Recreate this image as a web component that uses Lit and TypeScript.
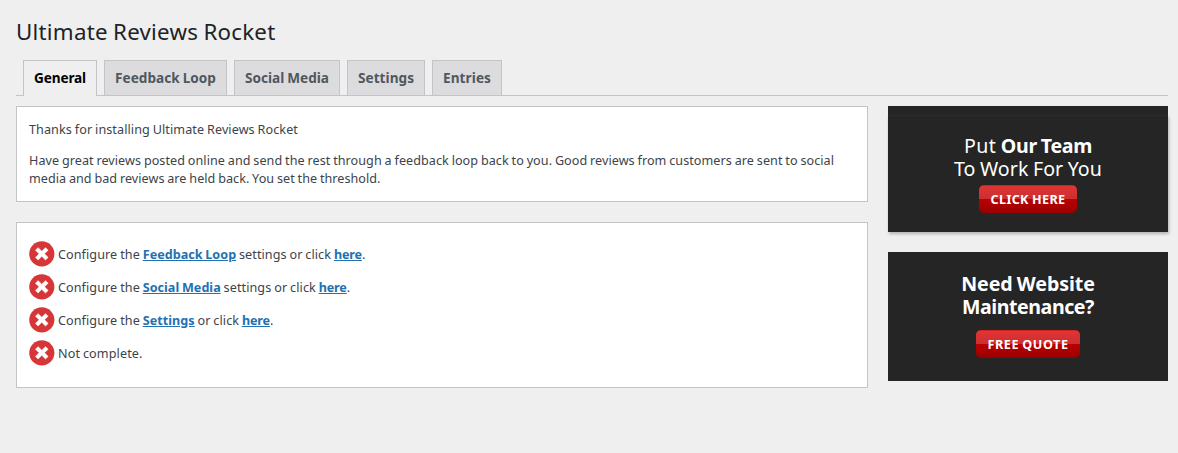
import { LitElement, html, css, svg } from "lit";
import { customElement, property } from "lit/decorators.js";

/** A run of text whose tracking is computed so that it spans a given width. */
@customElement("fit-run")
class FitRun extends LitElement {
  @property({ type: Number }) width = 0;
  @property() text = "";

  static styles = css`
    :host { display: inline; }
    .run { white-space: pre; word-spacing: -0.04em; }
  `;

  render() {
    return html`<span class="run">${this.text}</span>`;
  }

  updated() {
    const run = this.renderRoot.querySelector(".run") as HTMLElement;
    run.style.letterSpacing = "0px";
    const natural = run.getBoundingClientRect().width;
    run.style.letterSpacing = `${(this.width - natural) / this.text.length}px`;
  }
}

const fit = (text: string, width: number) =>
  html`<fit-run .text=${text} .width=${width}></fit-run>`;

const tabs = [
  { label: "General", width: 52, active: true },
  { label: "Feedback Loop", width: 101 },
  { label: "Social Media", width: 84 },
  { label: "Settings", width: 56 },
  { label: "Entries", width: 48 },
];

const steps = [
  { link: "Feedback Loop", linkWidth: 93.4, rest: " settings or click ", restWidth: 97.8 },
  { link: "Social Media", linkWidth: 78, rest: " settings or click ", restWidth: 98 },
  { link: "Settings", linkWidth: 52, rest: " or click ", restWidth: 47.2 },
];

const cross = html`<svg class="cross" viewBox="0 0 26 26">
  ${svg`<circle cx="12.8" cy="12.8" r="12.6" fill="#d63638"></circle>
  <path d="M9.1 6.7 12.8 10.3 16.5 6.7 19.1 9.2 15.5 12.8 19.1 16.4 16.5 18.9 12.8 15.3 9.1 18.9 6.5 16.4 10.1 12.8 6.5 9.2Z"
    fill="#fff" stroke="#fff" stroke-width=".6" stroke-linejoin="round"></path>`}
</svg>`;

@customElement("app-root")
class AppRoot extends LitElement {
  static styles = css`
    :host {
      display: block;
      box-sizing: border-box;
      height: 453px;
      padding: 19px 10px 0 16px;
      background: #efefef;
      color: #3c434a;
      font: 12.6px/18px "Noto Sans", sans-serif;
    }
    h1 {
      margin: 0;
      height: 41px;
      font-size: 22.3px;
      line-height: 25px;
      font-weight: 400;
      color: #1d2327;
    }
    .tabs {
      display: flex;
      gap: 7px;
      height: 35px;
      padding-left: 7px;
      border-bottom: 1px solid #c3c4c7;
    }
    .tab {
      box-sizing: border-box;
      height: 35px;
      padding: 5px 10px;
      border: 1px solid #c3c4c7;
      border-bottom: 0;
      background: #dcdcde;
      color: #50575e;
      font-size: 13.6px;
      line-height: 24px;
      font-weight: 700;
      text-decoration: none;
    }
    .tab.active {
      height: 36px;
      background: #efefef;
      color: #000;
    }
    .columns {
      display: grid;
      grid-template-columns: 852px 280px;
      gap: 20px;
      padding-top: 10px;
      align-items: start;
    }
    .main, .side { display: flex; flex-direction: column; gap: 20px; }
    .card {
      box-sizing: border-box;
      background: #fff;
      border: 1px solid #c3c4c7;
      padding: 14px 12px 12px;
    }
    .intro { height: 96px; }
    .intro p { margin: 0 0 13px; }
    .line { display: block; }
    .steps { height: 166px; padding-top: 14px; }
    .step { display: flex; align-items: center; gap: 3px; height: 33px; white-space: pre; }
    .step .words { padding-top: 2px; }
    .cross { width: 26px; height: 26px; flex: none; }
    .link {
      color: #2271b1;
      font-weight: 700;
      text-decoration: underline;
    }
    .promo {
      box-sizing: border-box;
      background: #252525;
      color: #fff;
      text-align: center;
      font-size: 19.6px;
      line-height: 23px;
    }
    .team { height: 126px; padding-top: 9px; }
    .team .inner {
      box-sizing: border-box;
      height: 117px;
      padding-top: 18px;
      border-top: 1px solid #2a2a2a;
      box-shadow: 1px 2px 3px rgba(0, 0, 0, 0.25);
      clip-path: inset(0 -6px -6px -6px);
    }
    .quote { height: 129px; padding-top: 20px; }
    .bold { font-weight: 700; }
    .button {
      display: block;
      box-sizing: border-box;
      height: 28px;
      margin: 5px auto 0;
      padding-top: 1px;
      border-radius: 5px;
      background: linear-gradient(#c81c1c 0, #e03334 1.5px, #ca3030 50%, #bc0000 50%, #980000);
      color: #fff;
      font-size: 12.6px;
      line-height: 27px;
      font-weight: 700;
      text-decoration: none;
    }
    .click { width: 98px; }
    .free { width: 104px; margin-top: 12px; }
  `;

  render() {
    return html`
      <h1>${fit("Ultimate Reviews Rocket", 259.5)}</h1>
      <nav class="tabs">
        ${tabs.map((t) => html`<a class="tab ${t.active ? "active" : ""}">${fit(t.label, t.width)}</a>`)}
      </nav>
      <div class="columns">
        <div class="main">
          <section class="card intro">
            <p>${fit("Thanks for installing Ultimate Reviews Rocket", 269)}</p>
            <p>
              <span class="line">${fit("Have great reviews posted online and send the rest through a feedback loop back to you. Good reviews from customers are sent to social", 805)}</span>
              <span class="line">${fit("media and bad reviews are held back. You set the threshold.", 351.5)}</span>
            </p>
          </section>
          <section class="card steps">
            ${steps.map((s) => html`<div class="step">${cross}<span class="words">${fit("Configure the ", 84.7)}<a class="link">${fit(s.link, s.linkWidth)}</a>${fit(s.rest, s.restWidth)}<a class="link">${fit("here", 28)}</a>.</span></div>`)}
            <div class="step">${cross}<span class="words">${fit("Not complete.", 84.5)}</span></div>
          </section>
        </div>
        <aside class="side">
          <section class="promo team">
            <div class="inner">
              <span class="line">${fit("Put ", 36.8)}<span class="bold">${fit("Our Team", 91.2)}</span></span>
              <span class="line">${fit("To Work For You", 148)}</span>
              <a class="button click">${fit("CLICK HERE", 75)}</a>
            </div>
          </section>
          <section class="promo quote">
            <span class="line bold">${fit("Need Website", 133.5)}</span>
            <span class="line bold">${fit("Maintenance?", 132)}</span>
            <a class="button free">${fit("FREE QUOTE", 81)}</a>
          </section>
        </aside>
      </div>
    `;
  }
}
